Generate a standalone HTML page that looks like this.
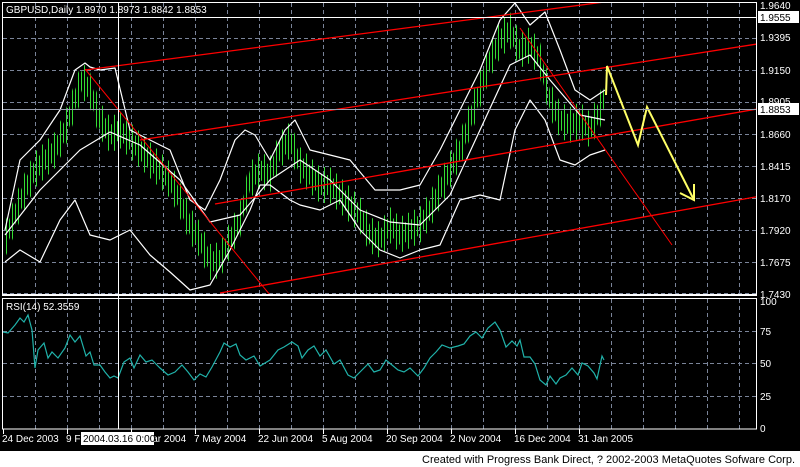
<!DOCTYPE html>
<html><head><meta charset="utf-8"><style>
body{margin:0;width:800px;height:467px;overflow:hidden;background:#000}
svg{display:block}
text{font-family:"Liberation Sans",sans-serif;font-size:10px;fill:#fff}
</style></head><body>
<svg width="800" height="467" viewBox="0 0 800 467">
<defs>
<pattern id="bA" width="6" height="10" patternUnits="userSpaceOnUse"><rect x="0" y="0" width="1" height="10" fill="#33dd33"/></pattern>
<pattern id="bB" width="6" height="10" patternUnits="userSpaceOnUse"><rect x="3" y="0" width="1" height="10" fill="#33dd33"/></pattern>
<clipPath id="mc"><rect x="3" y="3" width="753" height="291"/></clipPath>
<clipPath id="rc"><rect x="3" y="299" width="753" height="130"/></clipPath>
</defs>
<rect width="800" height="451" fill="#000"/>
<rect y="451" width="800" height="16" fill="#fff"/>
<text x="795" y="463" text-anchor="end" style="fill:#000;font-size:11px">Created with Progress Bank Direct, ? 2002-2003 MetaQuotes Sofware Corp.</text>
<g stroke="#7a8499" stroke-width="1" stroke-dasharray="4 3">
<path d="M35.5 3V294M67.5 3V294M99.5 3V294M131.5 3V294M163.5 3V294M195.5 3V294M227.5 3V294M259.5 3V294M291.5 3V294M323.5 3V294M355.5 3V294M387.5 3V294M419.5 3V294M451.5 3V294M483.5 3V294M515.5 3V294M547.5 3V294M579.5 3V294M611.5 3V294M643.5 3V294M675.5 3V294M707.5 3V294M739.5 3V294"/>
<path d="M35.5 299V429M67.5 299V429M99.5 299V429M131.5 299V429M163.5 299V429M195.5 299V429M227.5 299V429M259.5 299V429M291.5 299V429M323.5 299V429M355.5 299V429M387.5 299V429M419.5 299V429M451.5 299V429M483.5 299V429M515.5 299V429M547.5 299V429M579.5 299V429M611.5 299V429M643.5 299V429M675.5 299V429M707.5 299V429M739.5 299V429"/>
<path d="M3 38.5H756M3 70.5H756M3 102.5H756M3 134.5H756M3 166.5H756M3 198.5H756M3 230.5H756M3 262.5H756M3 293.5H756"/>
<path d="M3 331.5H756M3 363.5H756M3 396.5H756"/>
</g>
<g clip-path="url(#mc)">
<polygon fill="url(#bA)" points="5,222 15,197 25,172 35,152 45,142 55,132 65,112 75,82 82,62 90,72 100,102 110,117 120,112 130,122 140,132 150,142 160,152 170,162 180,182 190,207 200,222 210,244 220,242 230,222 240,202 250,162 260,152 270,157 280,132 290,122 300,147 310,157 320,167 330,167 340,177 350,187 360,197 370,217 380,222 390,207 400,217 410,212 420,207 430,192 440,172 450,152 460,132 470,102 480,72 490,42 500,22 510,12 520,32 530,27 540,42 550,82 560,102 570,107 580,102 590,112 600,92 605,77 605,113 600,128 590,148 580,138 570,143 560,138 550,118 540,78 530,63 520,68 510,48 500,58 490,78 480,108 470,138 460,168 450,188 440,208 430,228 420,243 410,248 400,253 390,243 380,258 370,253 360,233 350,223 340,213 330,203 320,203 310,193 300,183 290,158 280,168 270,193 260,188 250,198 240,238 230,258 220,278 210,280 200,258 190,243 180,218 170,198 160,188 150,178 140,168 130,158 120,148 110,153 100,138 90,108 82,98 75,118 65,148 55,168 45,178 35,188 25,208 15,233 5,258"/>
<polygon fill="url(#bB)" points="5,230 15,205 25,180 35,160 45,150 55,140 65,120 75,90 82,70 90,80 100,110 110,125 120,120 130,130 140,140 150,150 160,160 170,170 180,190 190,215 200,230 210,252 220,250 230,230 240,210 250,170 260,160 270,165 280,140 290,130 300,155 310,165 320,175 330,175 340,185 350,195 360,205 370,225 380,230 390,215 400,225 410,220 420,215 430,200 440,180 450,160 460,140 470,110 480,80 490,50 500,30 510,20 520,40 530,35 540,50 550,90 560,110 570,115 580,110 590,120 600,100 605,85 605,105 600,120 590,140 580,130 570,135 560,130 550,110 540,70 530,55 520,60 510,40 500,50 490,70 480,100 470,130 460,160 450,180 440,200 430,220 420,235 410,240 400,245 390,235 380,250 370,245 360,225 350,215 340,205 330,195 320,195 310,185 300,175 290,150 280,160 270,185 260,180 250,190 240,230 230,250 220,270 210,272 200,250 190,235 180,210 170,190 160,180 150,170 140,160 130,150 120,140 110,145 100,130 90,100 82,90 75,110 65,140 55,160 45,170 35,180 25,200 15,225 5,250"/>
<g fill="none" stroke="#fff" stroke-width="1.2" stroke-linejoin="round">
<polyline points="5,235 40,190 80,150 110,132 140,145 180,180 210,222 240,215 270,180 300,160 330,180 360,210 390,222 420,225 450,195 480,130 510,65 530,55 550,80 580,115 605,120"/>
<polyline points="5,230 20,160 40,140 60,110 75,70 85,63 90,67 100,70 115,68 130,130 150,140 170,150 190,200 205,210 220,180 235,140 245,130 255,135 270,160 285,130 295,120 310,150 330,155 350,160 375,190 400,190 420,185 440,150 460,110 480,70 500,20 515,3 530,25 545,12 560,50 575,90 590,100 605,90"/>
<polyline points="5,262 20,250 40,262 60,220 75,200 90,235 110,240 130,230 150,255 170,272 190,290 210,285 230,250 250,210 260,185 270,185 290,200 300,205 320,210 340,200 360,230 380,250 400,258 420,250 440,245 460,200 480,195 500,200 515,130 530,100 545,120 560,160 575,165 590,155 605,150"/>
</g>
<g stroke="#ff0000" stroke-width="1.3" fill="none">
<line x1="85" y1="70" x2="757" y2="-18"/>
<line x1="140" y1="140" x2="757" y2="44"/>
<line x1="215" y1="204" x2="757" y2="109"/>
<line x1="220" y1="293" x2="800" y2="189"/>
</g>
<g stroke="#ff0000" stroke-width="1" fill="none">
<line x1="85" y1="69" x2="270" y2="295"/>
<line x1="520" y1="28" x2="672" y2="245"/>
</g>
<polyline fill="none" stroke="#ffff66" stroke-width="2" points="606,95 607,66 638,145 647,107 693,198"/>
<polyline fill="none" stroke="#ffff66" stroke-width="2" points="680,193 694,200 694,184"/>
</g>
<line x1="3" y1="17.5" x2="757" y2="17.5" stroke="#fff"/>
<line x1="3" y1="109.5" x2="757" y2="109.5" stroke="#9aa0b0"/>
<g clip-path="url(#rc)">
<polyline fill="none" stroke="#20b2aa" stroke-width="1.2" points="3,332 8,333 15,325 20,318 24,322 28,315 32,330 35,368 38,350 44,343 48,358 52,352 58,358 65,348 70,335 75,342 80,336 86,356 90,352 94,365 100,365 105,372 110,378 114,376 118,378 124,362 130,358 134,368 140,355 146,362 152,360 160,368 168,375 175,372 182,365 188,372 194,380 200,374 206,377 212,367 220,352 224,343 230,347 236,344 240,355 246,360 254,356 260,366 265,363 270,360 278,350 284,347 292,342 298,346 302,358 308,350 314,346 320,356 326,350 334,364 340,360 348,375 354,378 360,372 368,364 374,372 380,370 386,360 392,365 398,370 404,372 410,368 418,376 424,368 430,358 436,352 442,345 450,348 458,346 464,344 470,336 476,332 482,338 488,328 495,322 500,330 506,347 512,341 517,346 520,340 524,357 530,357 535,364 540,380 546,385 550,376 556,384 560,378 566,375 572,368 578,375 582,363 588,366 594,373 597,379 602,356 604,360"/>
</g>
<line x1="118.5" y1="3" x2="118.5" y2="429" stroke="#fff"/>
<rect x="2.5" y="2.5" width="754" height="292" fill="none" stroke="#fff"/>
<line x1="2" y1="295.5" x2="757" y2="295.5" stroke="#fff"/>
<rect x="2.5" y="298.5" width="754" height="130.5" fill="none" stroke="#fff"/>
<text x="6" y="13">GBPUSD,Daily  1.8970 1.8973 1.8842 1.8853</text>
<text x="6" y="310">RSI(14)  52.3559</text>
<g>
<text x="760" y="9">1.9640</text>
<rect x="758" y="11" width="41" height="12" fill="#fff"/><text x="760" y="21" style="fill:#000">1.9555</text>
<text x="760" y="41">1.9395</text>
<text x="760" y="74">1.9150</text>
<text x="760" y="105">1.8905</text>
<rect x="758" y="103" width="41" height="12" fill="#fff"/><text x="760" y="113" style="fill:#000">1.8853</text>
<text x="760" y="138">1.8660</text>
<text x="760" y="170">1.8415</text>
<text x="760" y="202">1.8170</text>
<text x="760" y="234">1.7920</text>
<text x="760" y="266">1.7675</text>
<text x="760" y="298">1.7430</text>
<text x="760" y="305">100</text>
<text x="760" y="335">75</text>
<text x="760" y="367">50</text>
<text x="760" y="400">25</text>
<text x="760" y="432">0</text>
</g>
<g stroke="#fff"><path d="M3.5 429V434M67.5 429V434M131.5 429V434M195.5 429V434M259.5 429V434M323.5 429V434M387.5 429V434M451.5 429V434M515.5 429V434M579.5 429V434"/></g>
<text x="2" y="442">24 Dec 2003</text>
<text x="66" y="442">9 Feb 2004</text>
<text x="130" y="442">25 Mar 2004</text>
<text x="194" y="442">7 May 2004</text>
<text x="258" y="442">22 Jun 2004</text>
<text x="322" y="442">5 Aug 2004</text>
<text x="386" y="442">20 Sep 2004</text>
<text x="450" y="442">2 Nov 2004</text>
<text x="514" y="442">16 Dec 2004</text>
<text x="578" y="442">31 Jan 2005</text>
<rect x="81" y="432" width="73" height="13" fill="#fff"/>
<text x="83" y="442" style="fill:#000">2004.03.16 0:00</text>
</svg>
</body></html>
